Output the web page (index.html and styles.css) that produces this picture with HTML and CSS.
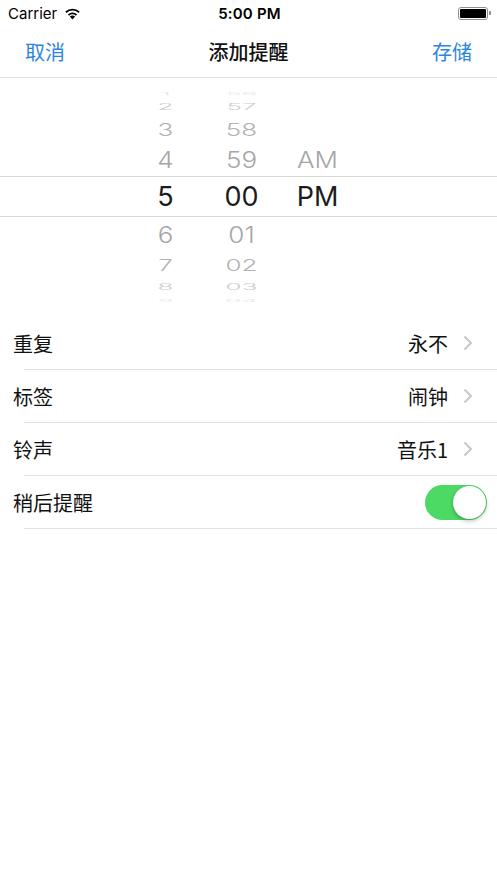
FILE: index.html
```html
<!DOCTYPE html>
<html lang="zh-CN">
<head>
    <meta charset="UTF-8">
    <meta name="viewport" content="width=device-width, initial-scale=1.0">
    <title>添加提醒</title>
    <link rel="stylesheet" href="styles.css">
</head>
<body>
    <div class="status-bar">
        <div class="carrier">
            Carrier
            <svg class="wifi" width="17" height="13" viewBox="0 0 17 13">
                <path d="M8.5 12.5 L5.9 9.6 A3.8 3.8 0 0 1 11.1 9.6 Z" fill="#000"/>
                <path d="M3.9 7.4 A6.6 6.6 0 0 1 13.1 7.4 L11.9 8.7 A4.9 4.9 0 0 0 5.1 8.7 Z" fill="#000"/>
                <path d="M1.3 4.6 A10.4 10.4 0 0 1 15.7 4.6 L14.5 5.9 A8.6 8.6 0 0 0 2.5 5.9 Z" fill="#000"/>
            </svg>
        </div>
        <div class="clock">5:00 PM</div>
        <div class="battery">
            <span class="battery-body"><span class="battery-fill"></span></span>
            <span class="battery-tip"></span>
        </div>
    </div>

    <div class="nav-bar">
        <span class="nav-btn">取消</span>
        <span class="nav-title">添加提醒</span>
        <span class="nav-btn">存储</span>
    </div>

    <div class="picker">
        <div class="picker-row r1"><span class="cell"><i>1</i></span><span class="cell"><i>56</i></span><span class="cell"></span></div>
        <div class="picker-row r2"><span class="cell"><i>2</i></span><span class="cell"><i>57</i></span><span class="cell"></span></div>
        <div class="picker-row r3"><span class="cell"><i>3</i></span><span class="cell"><i>58</i></span><span class="cell"></span></div>
        <div class="picker-row r4"><span class="cell"><i>4</i></span><span class="cell"><i>59</i></span><span class="cell"><i>AM</i></span></div>
        <div class="picker-row selected"><span class="cell"><i>5</i></span><span class="cell"><i>00</i></span><span class="cell"><i>PM</i></span></div>
        <div class="picker-row r6"><span class="cell"><i>6</i></span><span class="cell"><i>01</i></span><span class="cell"></span></div>
        <div class="picker-row r7"><span class="cell"><i>7</i></span><span class="cell"><i>02</i></span><span class="cell"></span></div>
        <div class="picker-row r8"><span class="cell"><i>8</i></span><span class="cell"><i>03</i></span><span class="cell"></span></div>
        <div class="picker-row r9"><span class="cell"><i>9</i></span><span class="cell"><i>04</i></span><span class="cell"></span></div>
    </div>

    <div class="settings">
        <div class="setting-row">
            <span class="label">重复</span>
            <span class="value">永不</span>
            <svg class="chevron" width="10" height="16" viewBox="0 0 10 16"><polyline points="1.5,1.5 8,8 1.5,14.5" fill="none" stroke="#c7c7cc" stroke-width="2"/></svg>
        </div>
        <div class="setting-row">
            <span class="label">标签</span>
            <span class="value">闹钟</span>
            <svg class="chevron" width="10" height="16" viewBox="0 0 10 16"><polyline points="1.5,1.5 8,8 1.5,14.5" fill="none" stroke="#c7c7cc" stroke-width="2"/></svg>
        </div>
        <div class="setting-row">
            <span class="label">铃声</span>
            <span class="value">音乐1</span>
            <svg class="chevron" width="10" height="16" viewBox="0 0 10 16"><polyline points="1.5,1.5 8,8 1.5,14.5" fill="none" stroke="#c7c7cc" stroke-width="2"/></svg>
        </div>
        <div class="setting-row switch-row">
            <span class="label">稍后提醒</span>
            <span class="switch on"><span class="knob"></span></span>
        </div>
    </div>
</body>
</html>
```

FILE: styles.css
```css
body {
    margin: 0;
    background: #fff;
    color: #000;
    font-family: Inter, "Noto Sans CJK SC", sans-serif;
}

/* status bar */
.status-bar {
    height: 26px;
    display: flex;
    align-items: center;
    justify-content: space-between;
    padding: 0 6px 0 8px;
    font-size: 15px;
}

.carrier {
    flex: 1;
    display: flex;
    align-items: center;
    gap: 7px;
}

.clock {
    font-weight: 600;
    letter-spacing: 0.2px;
}

.battery {
    flex: 1;
    display: flex;
    align-items: center;
    justify-content: flex-end;
}

.battery-body {
    width: 26px;
    height: 9px;
    padding: 1px;
    border: 1px solid #8e8e8e;
    border-radius: 3px;
}

.battery-fill {
    display: block;
    height: 100%;
    background: #000;
    border-radius: 1px;
}

.battery-tip {
    width: 2px;
    height: 4px;
    margin-left: 1px;
    background: #8e8e8e;
    border-radius: 0 1px 1px 0;
}

/* nav bar */
.nav-bar {
    height: 51px;
    display: flex;
    align-items: center;
    justify-content: space-between;
    padding: 0 25px;
    border-bottom: 1px solid #e2e2e2;
    font-family: "Noto Sans CJK SC", sans-serif;
    font-size: 20px;
}

.nav-btn {
    color: #2a86e0;
}

.nav-title {
    font-weight: 500;
    color: #111;
}

/* time picker */
.picker {
    padding: 10px 0 12px;
}

.picker-row {
    display: flex;
    justify-content: center;
    align-items: center;
    gap: 16px;
    padding-right: 14px;
    font-size: 26px;
    font-weight: 300;
    color: #a6a6a6;
    overflow: hidden;
}

.cell {
    width: 60px;
    text-align: center;
}

.cell i {
    display: inline-block;
    font-style: normal;
    line-height: 1;
}

.r1 { height: 10px; color: #e6e6e6; }
.r1 i { transform: scaleY(0.12); }
.r2 { height: 17px; color: #cdcdcd; }
.r2 i { transform: scaleY(0.32); }
.r3 { height: 28px; color: #b2b2b2; }
.r3 i { transform: scaleY(0.66); }
.r4 { height: 33px; }
.r4 i { transform: scaleY(0.86); }
.r6 { height: 34px; }
.r6 i { transform: scaleY(0.86); }
.r7 { height: 27px; color: #b2b2b2; }
.r7 i { transform: scaleY(0.62); }
.r8 { height: 17px; color: #cdcdcd; }
.r8 i { transform: scaleY(0.32); }
.r9 { height: 10px; color: #e6e6e6; }
.r9 i { transform: scaleY(0.12); }

.picker-row.selected {
    height: 39px;
    border-top: 1px solid #d8d8d8;
    border-bottom: 1px solid #d8d8d8;
    color: #1c1c1c;
    font-size: 27px;
    font-weight: 400;
}

/* settings list */
.setting-row {
    height: 52px;
    display: flex;
    align-items: center;
    padding: 0 24px 1px 13px;
    background: linear-gradient(#e2e2e2, #e2e2e2) no-repeat 24px 100% / calc(100% - 24px) 1px;
    font-family: "Noto Sans CJK SC", sans-serif;
    font-size: 20px;
    color: #111;
}

.label {
    flex: 1;
}

.value {
    margin-right: 15px;
}

.switch-row {
    padding-right: 10px;
}

.switch {
    width: 62px;
    height: 35px;
    border-radius: 18px;
    background: #4cd964;
    display: flex;
    align-items: center;
    justify-content: flex-end;
    padding: 0 1px;
    box-sizing: border-box;
}

.knob {
    width: 33px;
    height: 33px;
    border-radius: 50%;
    background: #fff;
    box-shadow: 0 2px 4px rgba(0, 0, 0, 0.25);
}
```
